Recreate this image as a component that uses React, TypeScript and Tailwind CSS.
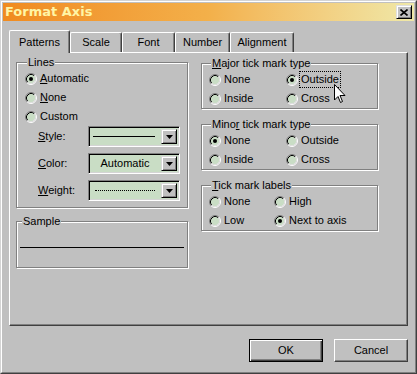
import React from "react";

function Radio({ checked }: { checked?: boolean }) {
  return (
    <svg width="12" height="12" viewBox="0 0 12 12" className="shrink-0">
      <circle cx="6" cy="6" r="4.5" fill="#c9ddc5" />
      <path d="M2.11 9.89 A5.5 5.5 0 0 1 9.89 2.11" stroke="#808080" fill="none" />
      <path d="M2.82 9.18 A4.5 4.5 0 0 1 9.18 2.82" stroke="#000" fill="none" />
      <path d="M9.89 2.11 A5.5 5.5 0 0 1 2.11 9.89" stroke="#fff" fill="none" />
      <path d="M9.18 2.82 A4.5 4.5 0 0 1 2.82 9.18" stroke="#e0e0e0" fill="none" />
      {checked && <circle cx="6" cy="6" r="2" fill="#000" />}
    </svg>
  );
}

function Opt({
  label,
  checked,
  focus,
  className,
}: {
  label: React.ReactNode;
  checked?: boolean;
  focus?: boolean;
  className?: string;
}) {
  return (
    <div className={"flex items-center h-[19px] " + (className ?? "")}>
      <Radio checked={checked} />
      <span
        className={
          "ml-px px-px leading-[15px] border " +
          (focus ? "border-dotted border-black" : "border-transparent")
        }
      >
        {label}
      </span>
    </div>
  );
}

function Group({
  label,
  className,
  children,
}: {
  label: React.ReactNode;
  className?: string;
  children?: React.ReactNode;
}) {
  return (
    <fieldset
      className={
        "border border-[#808080] shadow-[inset_1px_1px_0_#fff,1px_1px_0_#fff] " +
        (className ?? "")
      }
    >
      <legend className="ml-[2px] px-px leading-[13px] bg-[#c0c0c0]">{label}</legend>
      {children}
    </fieldset>
  );
}

function Dropdown({ children }: { children?: React.ReactNode }) {
  return (
    <div className="w-[92px] h-[21px] flex bg-[#c9ddc5] border border-t-[#808080] border-l-[#808080] border-r-white border-b-white shadow-[inset_1px_1px_0_#000,inset_-1px_-1px_0_#d4d4d4]">
      <div className="flex-1 flex items-center justify-center pl-[2px]">{children}</div>
      <div className="w-[16px] my-[2px] mr-[2px] bg-[#c0c0c0] border border-t-[#d8d8d8] border-l-[#d8d8d8] border-r-black border-b-black shadow-[inset_1px_1px_0_#fff,inset_-1px_-1px_0_#808080] flex items-center justify-center">
        <svg width="7" height="4" viewBox="0 0 7 4">
          <path d="M0 0 H7 L3.5 4 Z" fill="#000" />
        </svg>
      </div>
    </div>
  );
}

function Tab({
  label,
  selected,
  className,
}: {
  label: string;
  selected?: boolean;
  className: string;
}) {
  return (
    <div
      className={
        "flex items-center justify-center bg-[#c0c0c0] border-l border-t border-l-white border-t-white border-r border-r-[#404040] rounded-t-[2px] shadow-[inset_-1px_0_0_#808080] " +
        (selected ? "h-[23px] -mb-px relative z-10 " : "h-[20px] ") +
        className
      }
    >
      {label}
    </div>
  );
}

function Button({ label, def }: { label: string; def?: boolean }) {
  return (
    <div
      className={
        "w-[74px] h-[23px] flex items-center justify-center bg-[#c0c0c0] " +
        (def
          ? "border border-black shadow-[inset_1px_1px_0_#fff,inset_-1px_-1px_0_#404040,inset_-2px_-2px_0_#808080]"
          : "border border-t-white border-l-white border-r-[#404040] border-b-[#404040] shadow-[inset_-1px_-1px_0_#808080]")
      }
    >
      {label}
    </div>
  );
}

export default function App() {
  return (
    <div
      className="w-[417px] h-[374px] bg-[#c0c0c0] border border-t-[#d4d4d4] border-l-[#d4d4d4] border-r-[#404040] border-b-[#404040] text-[11px] text-black overflow-hidden"
      style={{ fontFamily: '"Liberation Sans", Arial, sans-serif' }}
    >
      <div className="w-full h-full border border-t-white border-l-white border-r-[#808080] border-b-[#808080] p-px flex flex-col">
        {/* Title bar */}
        <div className="h-[18px] shrink-0 flex items-center justify-between bg-gradient-to-r from-[#f08b1f] via-[#f3b04a] to-[#efe8a8] pl-[2px] pr-[2px]">
          <span
            className="text-[13px] font-bold text-[#fff5a6] leading-[18px]"
            style={{ fontFamily: '"DejaVu Sans", sans-serif' }}
          >
            Format Axis
          </span>
          <div className="w-[16px] h-[14px] bg-[#c0c0c0] border border-t-[#e0e0e0] border-l-[#e0e0e0] border-r-black border-b-black shadow-[inset_1px_1px_0_#fff,inset_-1px_-1px_0_#808080] flex items-center justify-center">
            <svg width="8" height="7" viewBox="0 0 8 7">
              <path d="M0.5 0.5 L7.5 6.5 M7.5 0.5 L0.5 6.5" stroke="#000" strokeWidth="1.6" />
            </svg>
          </div>
        </div>

        <div className="flex flex-col px-[6px] pt-[9px]">
          {/* Tabs */}
          <div className="flex items-end h-[22px] relative z-10">
            <Tab label="Patterns" selected className="w-[61px]" />
            <Tab label="Scale" className="w-[52px]" />
            <Tab label="Font" className="w-[53px]" />
            <Tab label="Number" className="w-[55px]" />
            <Tab label="Alignment" className="w-[64px]" />
          </div>

          {/* Panel */}
          <div className="relative h-[274px] border border-t-white border-l-white border-r-[#404040] border-b-[#404040] shadow-[inset_-1px_-1px_0_#808080] flex pl-[6px] pt-[3px] gap-[13px]">
            {/* Left column */}
            <div className="w-[172px] flex flex-col">
              <Group label="Lines" className="pl-[8px] pb-[6px]">
                <Opt checked label={<><u>A</u>utomatic</>} />
                <Opt label={<><u>N</u>one</>} />
                <Opt label="Custom" />
                <div className="flex flex-col gap-[6px]">
                  <div className="flex items-center ml-[13px]">
                    <span className="w-[50px]">
                      <u>S</u>tyle:
                    </span>
                    <Dropdown>
                      <div className="w-[62px] h-px bg-black mr-[4px]" />
                    </Dropdown>
                  </div>
                  <div className="flex items-center ml-[13px]">
                    <span className="w-[50px]">
                      <u>C</u>olor:
                    </span>
                    <Dropdown>
                      <span className="mr-[2px]">Automatic</span>
                    </Dropdown>
                  </div>
                  <div className="flex items-center ml-[13px]">
                    <span className="w-[50px]">
                      <u>W</u>eight:
                    </span>
                    <Dropdown>
                      <div className="w-[60px] h-0 border-t border-dotted border-black mr-[3px]" />
                    </Dropdown>
                  </div>
                </div>
              </Group>

              <Group label="Sample" className="mt-[7px] px-[3px]">
                <div className="h-px bg-black mt-[19px] mb-[19px]" />
              </Group>
            </div>

            {/* Right column */}
            <div className="w-[177px] flex flex-col pt-px">
              <Group label={<><u>M</u>ajor tick mark type</>} className="pl-[7px]">
                <div className="grid grid-cols-[77px_1fr]">
                  <Opt label="None" />
                  <Opt checked focus label="Outside" />
                  <Opt label="Inside" />
                  <Opt label="Cross" />
                </div>
              </Group>
              <Group label={<>Mino<u>r</u> tick mark type</>} className="pl-[7px] mt-[9px]">
                <div className="grid grid-cols-[77px_1fr]">
                  <Opt checked label="None" />
                  <Opt label="Outside" />
                  <Opt label="Inside" />
                  <Opt label="Cross" />
                </div>
              </Group>
              <Group label={<><u>T</u>ick mark labels</>} className="pl-[7px] mt-[9px]">
                <div className="grid grid-cols-[65px_1fr]">
                  <Opt label="None" />
                  <Opt label="High" />
                  <Opt label="Low" />
                  <Opt checked label="Next to axis" />
                </div>
              </Group>
            </div>

            {/* Mouse cursor */}
            <svg
              className="absolute left-[324px] top-[31px]"
              width="12"
              height="20"
              viewBox="0 0 12 20"
            >
              <path
                d="M0.5 0.5 V16 L4 12.5 L6.5 18.5 L8.5 17.5 L6 11.5 H11 Z"
                fill="#fff"
                stroke="#000"
                strokeWidth="1"
                strokeLinejoin="miter"
              />
            </svg>
          </div>

          {/* Buttons */}
          <div className="flex justify-end gap-[11px] mt-[13px]">
            <Button label="OK" def />
            <Button label="Cancel" />
          </div>
        </div>
      </div>
    </div>
  );
}
